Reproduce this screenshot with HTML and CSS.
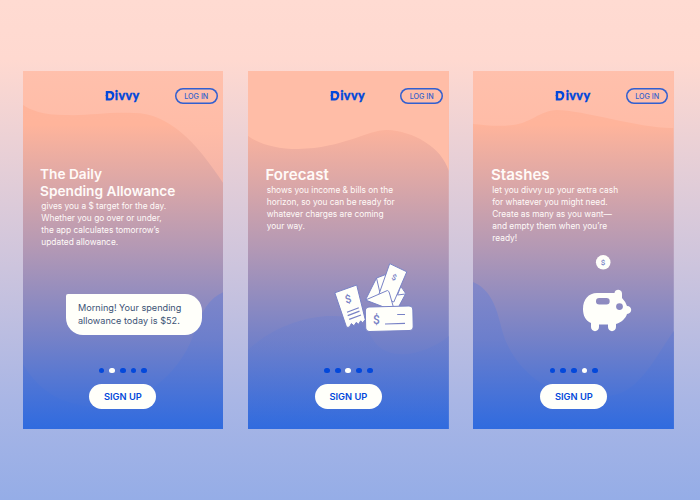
FILE: index.html
```html
<!DOCTYPE html>
<html lang="en">
<head>
<meta charset="utf-8">
<title>Divvy</title>
<link rel="stylesheet" href="styles.css">
</head>
<body>
<svg class="defs" width="0" height="0" aria-hidden="true">
  <defs>
    <linearGradient id="main" gradientUnits="userSpaceOnUse" x1="0" y1="0" x2="0" y2="358">
      <stop offset="0" stop-color="#ffb59c"/><stop offset=".15" stop-color="#ffb49b"/>
      <stop offset=".5" stop-color="#b298b5"/><stop offset=".75" stop-color="#7481c8"/><stop offset="1" stop-color="#306bdf"/>
    </linearGradient>
    <linearGradient id="sky" gradientUnits="userSpaceOnUse" x1="0" y1="0" x2="0" y2="120">
      <stop offset="0" stop-color="#ffc0ac"/><stop offset=".5" stop-color="#ffbca7"/><stop offset="1" stop-color="#f1b2a8"/>
    </linearGradient>
    <linearGradient id="sea" gradientUnits="userSpaceOnUse" x1="0" y1="180" x2="0" y2="358">
      <stop offset="0" stop-color="#8b8bc8"/><stop offset=".5" stop-color="#6a7ecd"/><stop offset="1" stop-color="#306bdf"/>
    </linearGradient>
    <symbol id="logo" viewBox="0 0 11 12"><path fill-rule="evenodd" d="M.8 1H5.3C8.2 1 9.8 3.3 9.3 6C8.9 8.7 7.2 10.5 4.7 10.5H.8V6.2L.3 5.6L.8 5ZM3.2 3.2V8.3H4.8C6.3 8.3 7 7.2 7 5.7C7 4.2 6.3 3.2 4.8 3.2Z" fill="#0348db"/></symbol>
  </defs>
</svg>
<main class="screens">
  <section class="card">
    <svg class="scene" viewBox="0 0 201 358" preserveAspectRatio="none">
      <rect width="201" height="358" fill="url(#main)"/>
      <path d="M0 0H201V113C173 70 145 42 111 42C82 41 65 45 42 44C20 44 7 39 0 34Z" fill="url(#sky)"/>
      <path d="M0 293C17 322 41 334 73 336C117 333 155 307 171 263C178 240 188 226 201 221V358H0Z" fill="url(#sea)" opacity=".85"/>
    </svg>
    <header class="top"><div class="brand"><svg class="mark"><use href="#logo"/></svg><span>ivvy</span></div><a class="login">LOG IN</a></header>
    <div class="copy">
      <h2><span>The Daily</span><span>Spending Allowance</span></h2>
      <p><span>gives you a $ target for the day.</span><span>Whether you go over or under,</span><span>the app calculates tomorrow’s</span><span>updated allowance.</span></p>
    </div>
    <div class="bubble"><span>Morning! Your spending</span><span>allowance today is $52.</span></div>
    <footer><div class="dots"><i></i><i class="on"></i><i></i><i></i><i></i></div><a class="signup">SIGN UP</a></footer>
  </section>
  <section class="card">
    <svg class="scene" viewBox="0 0 201 358" preserveAspectRatio="none">
      <rect width="201" height="358" fill="url(#main)"/>
      <path d="M0 0H201V100C194 76 165 60 139 59C119 59 96 77 50 78C29 78 11 73 0 65Z" fill="#ffbda7"/>
      <path d="M0 279C25 255 60 245 83 245C112 244 119 257 126 270C141 292 178 284 201 265V358H0Z" fill="url(#sea)" opacity=".5"/>
    </svg>
    <header class="top"><div class="brand"><svg class="mark"><use href="#logo"/></svg><span>ivvy</span></div><a class="login">LOG IN</a></header>
    <div class="copy">
      <h2><span class="single">Forecast</span></h2>
      <p><span>shows you income &amp; bills on the</span><span>horizon, so you can be ready for</span><span>whatever charges are coming</span><span>your way.</span></p>
    </div>
    <svg class="papers" viewBox="0 0 95 80">
      <g fill="#fffffa" stroke="#7882c6" stroke-width="1" stroke-linejoin="round">
        <path d="M9.8 34.8L31.7 27L40.2 61.5L37.6 65L35.7 62.8L33.6 66.2L31.2 64.4L29 67.8L26.4 65.6L24.3 69.2L21.6 69.3Z"/>
        <path d="M51.5 20L62 16L78 31.5L80.5 36L73.5 49H60L40.5 42Z"/>
        <path d="M51.5 20L55 35M75.5 29L72.5 37L80.5 36"/>
        <path d="M64.7 5.6L81.8 13.8L68.8 44L53.8 36.7Z"/>
        <path d="M40.5 42L62.4 32.5Q64 33 64.4 35L68.5 49.5H60Z"/>
        <rect x="40.5" y="48.5" width="47.5" height="24.5" rx="4" transform="rotate(-1.2 64 60)"/>
      </g>
      <g class="ink">
        <path d="M22 54.3L33.8 49.8M22.7 57.6L34.5 53.1M24.2 61.4L36 57M72.2 56.5H80M60 66L80 65.3"/>
      </g>
      <g class="money"><text x="20" y="45" font-size="11" transform="rotate(-14 23 41)">$</text><text x="48" y="65.5" font-size="12">$</text><text x="67" y="22" font-size="8" transform="rotate(22 69 19)">$</text></g>
    </svg>
    <footer><div class="dots"><i></i><i></i><i class="on"></i><i></i><i></i></div><a class="signup">SIGN UP</a></footer>
  </section>
  <section class="card">
    <svg class="scene" viewBox="0 0 201 358" preserveAspectRatio="none">
      <rect width="201" height="358" fill="url(#main)"/>
      <path d="M0 0H201V57C169 58 110 39 84 39C66 40 58 52 40 54C26 56 11 54 0 53Z" fill="url(#sky)"/>
      <path d="M0 211C14 217 22 229 28 255C33 277 46 297 68 312C90 327 120 330 145 323C170 315 185 282 201 260V358H0Z" fill="url(#sea)" opacity=".85"/>
    </svg>
    <header class="top"><div class="brand"><svg class="mark"><use href="#logo"/></svg><span>ivvy</span></div><a class="login">LOG IN</a></header>
    <div class="copy">
      <h2><span class="single">Stashes</span></h2>
      <p><span>let you divvy up your extra cash</span><span>for whatever you might need.</span><span>Create as many as you want—</span><span>and empty them when you’re</span><span>ready!</span></p>
    </div>
    <svg class="piggy" viewBox="0 0 65 90">
      <circle cx="28.2" cy="12.3" r="7.3" fill="#fffffa"/>
      <g class="money"><text x="25.8" y="15.1" font-size="8">$</text></g>
      <path fill="#fffffa" fill-rule="evenodd" d="M22 43H39.5C40 38.5 47 39 47 43.5V48Q50.5 51.5 52 56C57.5 56 57.8 63.5 52 64C50.5 68.5 47 72 41 74V77C41 82.5 33 82.5 33 77V74.5H24V77C24 82.5 16 82.5 16 77V73C10.5 70.5 8 65.5 8 59C8 49.5 13.5 43 22 43ZM24.2 48A3.2 3.2 0 0 0 24.2 54.4H31.5A3.2 3.2 0 0 0 31.5 48ZM44.5 53.2A3.4 3.4 0 1 0 44.5 60A3.4 3.4 0 1 0 44.5 53.2Z"/>
    </svg>
    <footer><div class="dots"><i></i><i></i><i></i><i class="on"></i><i></i></div><a class="signup">SIGN UP</a></footer>
  </section>
</main>
</body>
</html>
```
FILE: styles.css
```css
* { box-sizing: border-box; }
body {
  margin: 0;
  width: 700px;
  height: 500px;
  overflow: hidden;
  font-family: Inter, Roboto, sans-serif;
  background: linear-gradient(#ffdbd2 0, #ffd9d0 12%, #d1c6dc 50%, #a9b6e5 80%, #95ade7 100%);
}
.defs { position: absolute; }
.screens { display: flex; gap: 24.7px; padding: 71px 0 0 22.5px; }
.card {
  position: relative;
  display: flex;
  flex-direction: column;
  width: 200.8px;
  height: 358px;
  flex: none;
  overflow: hidden;
}
.scene { position: absolute; inset: 0; width: 100%; height: 100%; }
.top, .copy, .bubble, .papers, .piggy, footer { position: relative; flex: none; }
.top { display: flex; height: 93px; padding: 17px 5.8px 0 82px; justify-content: space-between; align-items: flex-start; }
.brand { display: flex; height: 16px; color: #0348db; font: 900 12.6px/16px Lato, sans-serif; letter-spacing: .3px; -webkit-text-stroke: .3px #0348db; }
.mark { width: 11px; height: 12px; margin-top: 2px; margin-right: -.7px; }
.login {
  width: 42.5px;
  height: 16px;
  box-shadow: inset 0 0 0 1.5px #315fd0;
  border-radius: 8px;
  color: #315fcc;
  font-size: 7.2px;
  font-weight: 500;
  line-height: 17px;
  text-align: center;
}
.copy { padding-left: 17.5px; color: #fffaf8; }
h2 { margin: 0; padding-top: 2px; font-size: 13.7px; font-weight: 600; line-height: 16.5px; }
h2 span, p span, .bubble span { display: block; width: max-content; }
h2 .single { font-size: 15.1px; line-height: 17.5px; }
p { margin: 0 0 0 1.3px; font-size: 8.35px; line-height: 12.05px; padding-top: .5px; }
.bubble {
  width: 136px;
  height: 41px;
  margin: 46px 0 0 43px;
  padding: 8px 0 0 12.5px;
  border-radius: 2px 17px 17px 17px;
  background: #fffffa;
  color: #3b5275;
  font-size: 9.15px;
  line-height: 12.9px;
}
.papers { position: absolute; left: 77px; top: 187px; width: 95px; height: 80px; }
.piggy { position: absolute; left: 101.5px; top: 179px; width: 65px; height: 90px; }
.ink { fill: none; stroke: #7882c6; stroke-width: 1.2; }
.money { fill: #7882c6; font-family: Roboto, sans-serif; font-weight: 500; }
footer { display: flex; flex-direction: column; align-items: center; margin-top: auto; height: 61.5px; }
.dots { display: flex; gap: 4.9px; margin: 0 0 10.7px; }
.dots i { width: 5.8px; height: 5.8px; border-radius: 50%; background: #0348db; }
.dots .on { background: #fffffa; }
.signup {
  width: 67px;
  height: 25px;
  border-radius: 13px;
  background: #fffffa;
  color: #0348db;
  font-size: 9.3px;
  font-weight: 600;
  line-height: 25px;
  text-align: center;
}
```
